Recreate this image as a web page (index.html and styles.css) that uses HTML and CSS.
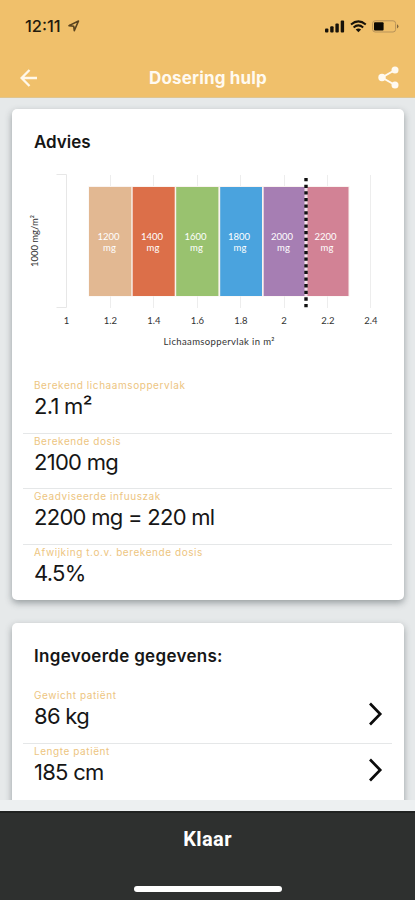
FILE: index.html
```html
<!DOCTYPE html>
<html lang="nl">
<head>
<meta charset="utf-8">
<meta name="viewport" content="width=device-width, initial-scale=1">
<title>Dosering hulp</title>
<link rel="stylesheet" href="styles.css">
</head>
<body>
<header class="header">
  <div class="status">
    <span class="time">12:11</span>
    <svg class="location" width="12" height="12" viewBox="0 0 12 12"><path d="M1 5.600 10.500 1 6.300 10.600 5.700 6.200Z" fill="none" stroke="#59431f" stroke-width="1.600" stroke-linejoin="round"/></svg>
    <svg class="signal" width="20" height="13" viewBox="0 0 20 13" fill="#17120a"><rect x="0" y="8.500" width="3.400" height="4" rx="1"/><rect x="5.200" y="6.200" width="3.400" height="6.300" rx="1"/><rect x="10.400" y="3.500" width="3.400" height="9" rx="1"/><rect x="15.700" y=".4" width="3.400" height="12.100" rx="1"/></svg>
    <svg class="wifi" width="17" height="13" viewBox="0 0 17 13" fill="none" stroke="#17120a" stroke-width="2"><path d="M1 4.600Q8.300-1.800 15.800 4.600M3.600 7.400Q8.300 3.400 13.200 7.400"/><path d="M5.700 9.400Q8.400 7.400 11.100 9.400L8.400 12.200Z" fill="#17120a" stroke="none"/></svg>
    <svg class="battery" width="27" height="13" viewBox="0 0 27 13"><rect x=".6" y=".8" width="23" height="11.200" rx="2.600" fill="none" stroke="#b8935a"/><rect x="2" y="2.200" width="9.600" height="8.400" rx="1" fill="#0c0904"/><path d="M25 4.200Q28 6.400 25 8.600Z" fill="#80653b"/></svg>
  </div>
  <nav class="nav">
    <svg class="back" width="18" height="18" viewBox="0 0 18 18" fill="none" stroke="#fff8ea" stroke-width="2.300"><path d="M17 9H2M9.500 1 1.600 9l7.900 8"/></svg>
    <h1 class="title">Dosering hulp</h1>
    <svg class="share" width="21" height="23" viewBox="0 0 21 23" fill="#fffaf0"><path d="M17 4 4 11.500 17 19" fill="none" stroke="#fffaf0" stroke-width="2"/><circle cx="17" cy="4" r="3.500"/><circle cx="4" cy="11.500" r="3.700"/><circle cx="17" cy="19" r="3.500"/></svg>
  </nav>
</header>
<main class="content">
  <section class="card advice">
    <h2 class="heading">Advies</h2>
    <svg class="chart" width="393" height="200" viewBox="12 160 393 200">
      <g fill="none" stroke="#e7e7e7">
        <path d="M56.500 174.500H66.500V307.500H56.500"/>
        <path d="M110.500 175V308M153.500 175V308M197.500 175V308M240.500 175V308M284.500 175V308M327.500 175V308M370.500 175V308" stroke="#ededed"/>
      </g>
      <rect x="88.500" y="186" width="261" height="110.500" fill="#faf3f0"/>
      <g>
        <rect x="89" y="187" width="42.300" height="109" fill="#e2b892"/>
        <rect x="132.700" y="187" width="42" height="109" fill="#dc6f49"/>
        <rect x="176.200" y="187" width="42.200" height="109" fill="#99c26f"/>
        <rect x="220.200" y="187" width="41.800" height="109" fill="#4aa3de"/>
        <rect x="263.700" y="187" width="41.800" height="109" fill="#a67eb3"/>
        <rect x="306" y="187" width="42.500" height="109" fill="#d28295"/>
      </g>
      <path d="M306 187V296" stroke="#f2dfe6" stroke-width="3"/>
      <path d="M306 178V309" stroke="#111" stroke-width="3.400" stroke-dasharray="3.300 3.330"/>
      <g class="bag">
        <text x="108.500" y="240">1200</text><text x="109.500" y="251">mg</text>
        <text x="152" y="240">1400</text><text x="153" y="251">mg</text>
        <text x="195.500" y="240">1600</text><text x="196.500" y="251">mg</text>
        <text x="239" y="240">1800</text><text x="240" y="251">mg</text>
        <text x="282" y="240">2000</text><text x="283.500" y="251">mg</text>
        <text x="325.500" y="240">2200</text><text x="327" y="251">mg</text>
      </g>
      <g class="axis">
        <text x="66.500" y="324">1</text><text x="110.500" y="324">1.2</text><text x="154" y="324">1.4</text><text x="197.500" y="324">1.6</text><text x="241" y="324">1.8</text><text x="284" y="324">2</text><text x="328" y="324">2.2</text><text x="371" y="324">2.4</text>
        <text x="219" y="345" textLength="111">Lichaamsoppervlak in m²</text>
        <text transform="translate(37.500 241) rotate(-90)" textLength="52">1000 mg/m²</text>
      </g>
    </svg>
    <dl class="rows">
      <div class="row"><dt>Berekend lichaamsoppervlak</dt><dd>2.1 m²</dd></div>
      <div class="row"><dt>Berekende dosis</dt><dd>2100 mg</dd></div>
      <div class="row"><dt>Geadviseerde infuuszak</dt><dd>2200 mg = 220 ml</dd></div>
      <div class="row"><dt>Afwijking t.o.v. berekende dosis</dt><dd>4.5%</dd></div>
    </dl>
  </section>
  <section class="card">
    <h2 class="heading wide">Ingevoerde gegevens:</h2>
    <dl class="rows inputs">
      <div class="row link"><div><dt>Gewicht patiënt</dt><dd>86 kg</dd></div><svg width="15" height="24" viewBox="0 0 15 24"><path d="m2 1.500 10.200 10.500L2 22.500" fill="none" stroke="#0b0b0b" stroke-width="2.700"/></svg></div>
      <div class="row link"><div><dt>Lengte patiënt</dt><dd>185 cm</dd></div><svg width="15" height="24" viewBox="0 0 15 24"><path d="m2 1.500 10.200 10.500L2 22.500" fill="none" stroke="#0b0b0b" stroke-width="2.700"/></svg></div>
    </dl>
  </section>
</main>
<footer class="footer">
  <button class="done">Klaar</button>
  <div class="home"></div>
</footer>
</body>
</html>
```
FILE: styles.css
```css
* { box-sizing: border-box; }
body {
  margin: 0;
  height: 900px;
  display: flex;
  flex-direction: column;
  overflow: hidden;
  background: #edf0f1;
  font-family: Inter, "Liberation Sans", sans-serif;
  color: #161616;
}
h1, h2, dl, dt, dd { margin: 0; }
svg { display: block; flex: none; }
.header {
  height: 98px;
  flex: none;
  background: #f0c06b;
  border-bottom: 1px solid #dfc590;
}
.status {
  height: 58px;
  display: flex;
  align-items: center;
  padding: 0 16px 6px 25px;
}
.time { font-size: 16.5px; font-weight: 500; width: 40px; color: #241b0d; }
.location { margin-left: 3px; }
.signal { margin-left: auto; }
.wifi { margin-left: 5px; }
.battery { margin-left: 5px; }
.nav {
  height: 39px;
  display: flex;
  align-items: center;
  justify-content: space-between;
  padding: 0 16px 0 20px;
}
.title { font-size: 17px; line-height: 24px; font-weight: 700; letter-spacing: .15px; color: #fffaf0; }
.content {
  height: 702px;
  flex: none;
  overflow: hidden;
  padding: 11px 11px 0 11.5px;
  background: #e6e9ea;
}
.card {
  height: 491px;
  background: #fff;
  border-radius: 5px;
  box-shadow: 0 3px 7px rgba(65, 75, 80, .48);
}
.card + .card { margin-top: 23px; }
.heading {
  height: 51px;
  padding: 21px 22.5px 0;
  font-size: 17px;
  line-height: 24px;
  font-weight: 600;
}
.wide { letter-spacing: .3px; }
.chart { font-family: Lato, sans-serif; }
.chart text { text-anchor: middle; }
.bag { fill: #fff; font-size: 9.5px; }
.axis { fill: #333; font-size: 9.5px; }
.rows { padding: 18px 12px 0 11.5px; }
.inputs { padding-top: 14px; }
.row {
  height: 55.5px;
  padding: 0 11px;
  border-bottom: 1px solid #e5e7e8;
}
.row:last-child { border-bottom: 0; }
dt { font-size: 10px; line-height: 15px; letter-spacing: .57px; color: #edc57f; white-space: nowrap; }
dd { font-size: 22px; line-height: 26px; letter-spacing: -.72px; white-space: nowrap; }
.link { display: flex; justify-content: space-between; }
.link svg { margin: 14px -2px 0 0; }
.footer {
  height: 89px;
  flex: none;
  margin-top: 11px;
  background: #2e302f;
  border-top: 2px solid #202221;
  display: flex;
  flex-direction: column;
  align-items: center;
}
.done {
  margin-top: 14px;
  padding: 0;
  border: 0;
  background: none;
  color: #fff;
  font: 700 20px/24px Roboto, sans-serif;
  letter-spacing: .4px;
}
.home { width: 148px; height: 6px; margin-top: 35px; border-radius: 3px; background: #fff; }
```
